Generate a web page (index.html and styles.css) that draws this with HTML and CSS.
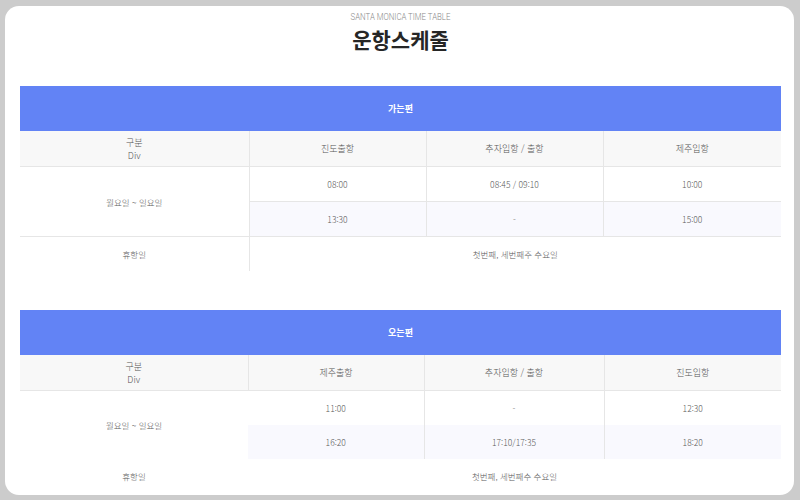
FILE: index.html
```html
<!DOCTYPE html>
<html lang="ko">
<head>
<meta charset="utf-8">
<title>운항스케줄</title>
<link rel="stylesheet" href="styles.css">
</head>
<body>
<div class="card">
  <div class="subtitle">SANTA MONICA TIME TABLE</div>
  <h1 class="title">운항스케줄</h1>

  <table class="sched first">
    <colgroup><col class="c1"><col class="c2"><col class="c3"><col class="c4"></colgroup>
    <tr><th class="bar" colspan="4">가는편</th></tr>
    <tr class="head">
      <td>구분<br>Div</td><td>진도출항</td><td>추자입항 / 출항</td><td>제주입항</td>
    </tr>
    <tr class="row">
      <td class="div" rowspan="2">월요일 ~ 일요일</td><td>08:00</td><td>08:45 / 09:10</td><td>10:00</td>
    </tr>
    <tr class="row alt">
      <td>13:30</td><td>-</td><td>15:00</td>
    </tr>
    <tr class="row last">
      <td class="div">휴항일</td><td colspan="3">첫번째, 세번째주 수요일</td>
    </tr>
  </table>

  <table class="sched second">
    <colgroup><col class="d1"><col class="d2"><col class="d3"><col class="d4"></colgroup>
    <tr><th class="bar" colspan="4">오는편</th></tr>
    <tr class="head">
      <td>구분<br>Div</td><td>제주출항</td><td>추자입항 / 출항</td><td>진도입항</td>
    </tr>
    <tr class="row">
      <td class="div" rowspan="2">월요일 ~ 일요일</td><td>11:00</td><td>-</td><td>12:30</td>
    </tr>
    <tr class="row alt">
      <td>16:20</td><td>17:10/17:35</td><td>18:20</td>
    </tr>
    <tr class="row last">
      <td class="div">휴항일</td><td colspan="3">첫번째, 세번째수 수요일</td>
    </tr>
  </table>
</div>
</body>
</html>
```

FILE: styles.css
```css
html, body {
  margin: 0;
  padding: 0;
  background: #cccccc;
  height: 100%;
}
body {
  font-family: "Noto Sans CJK KR", "Noto Sans", sans-serif;
  color: #555;
}
.card {
  margin: 6px 6px 0 5px;
  height: 489px;
  background: #fff;
  border-radius: 14px;
  padding: 0 13px 0 15px;
  box-sizing: border-box;
  overflow: hidden;
}
.subtitle {
  padding-top: 5px;
  text-align: center;
  font-family: "Roboto", "Noto Sans", sans-serif;
  font-weight: 300;
  font-size: 8.5px;
  line-height: 12px;
  color: #8a8a8a;
  transform: scaleX(0.92);
}
.title {
  margin: 2px 0 0;
  text-align: center;
  font-size: 21px;
  line-height: 28px;
  font-weight: 700;
  color: #262626;
}
.sched {
  width: 761px;
  border-collapse: collapse;
  table-layout: fixed;
  font-size: 8.5px;
  font-weight: 300;
}
.first { margin-top: 33px; }
.second { margin-top: 39px; }
.c1 { width: 229px; }
.c2 { width: 177px; }
.c3 { width: 177px; }
.c4 { width: 178px; }
.d1 { width: 228px; }
.d2 { width: 176px; }
.d3 { width: 180px; }
.d4 { width: 177px; }
.sched td, .sched th {
  padding: 0;
  text-align: center;
  vertical-align: middle;
}
.bar {
  background: #6283f5;
  color: #fff;
  height: 45px;
  font-weight: 700;
  font-size: 9px;
}
.head td {
  background: #f8f8f8;
  height: 35px;
  line-height: 13px;
  color: #555;
  border-bottom: 1px solid #e6e6e6;
  border-left: 1px solid #e6e6e6;
  font-size: 9px;
}
.head td:first-child { border-left: 0; }
.row td {
  height: 34px;
  color: #5a5a5a;
  border-left: 1px solid #e6e6e6;
  border-bottom: 1px solid #e6e6e6;
}
.row td.div { border-left: 0; }
.alt td { background: #f9f9fe; }
.alt td.div { background: #fff; }
.row.last td { border-bottom: 0; }
.second .row td { border-bottom: 0; }
.second .row td.div + td { border-left: 0; }
.second .alt td:first-child { border-left: 0; }
.second .row.last td { border-left: 0; }
```
